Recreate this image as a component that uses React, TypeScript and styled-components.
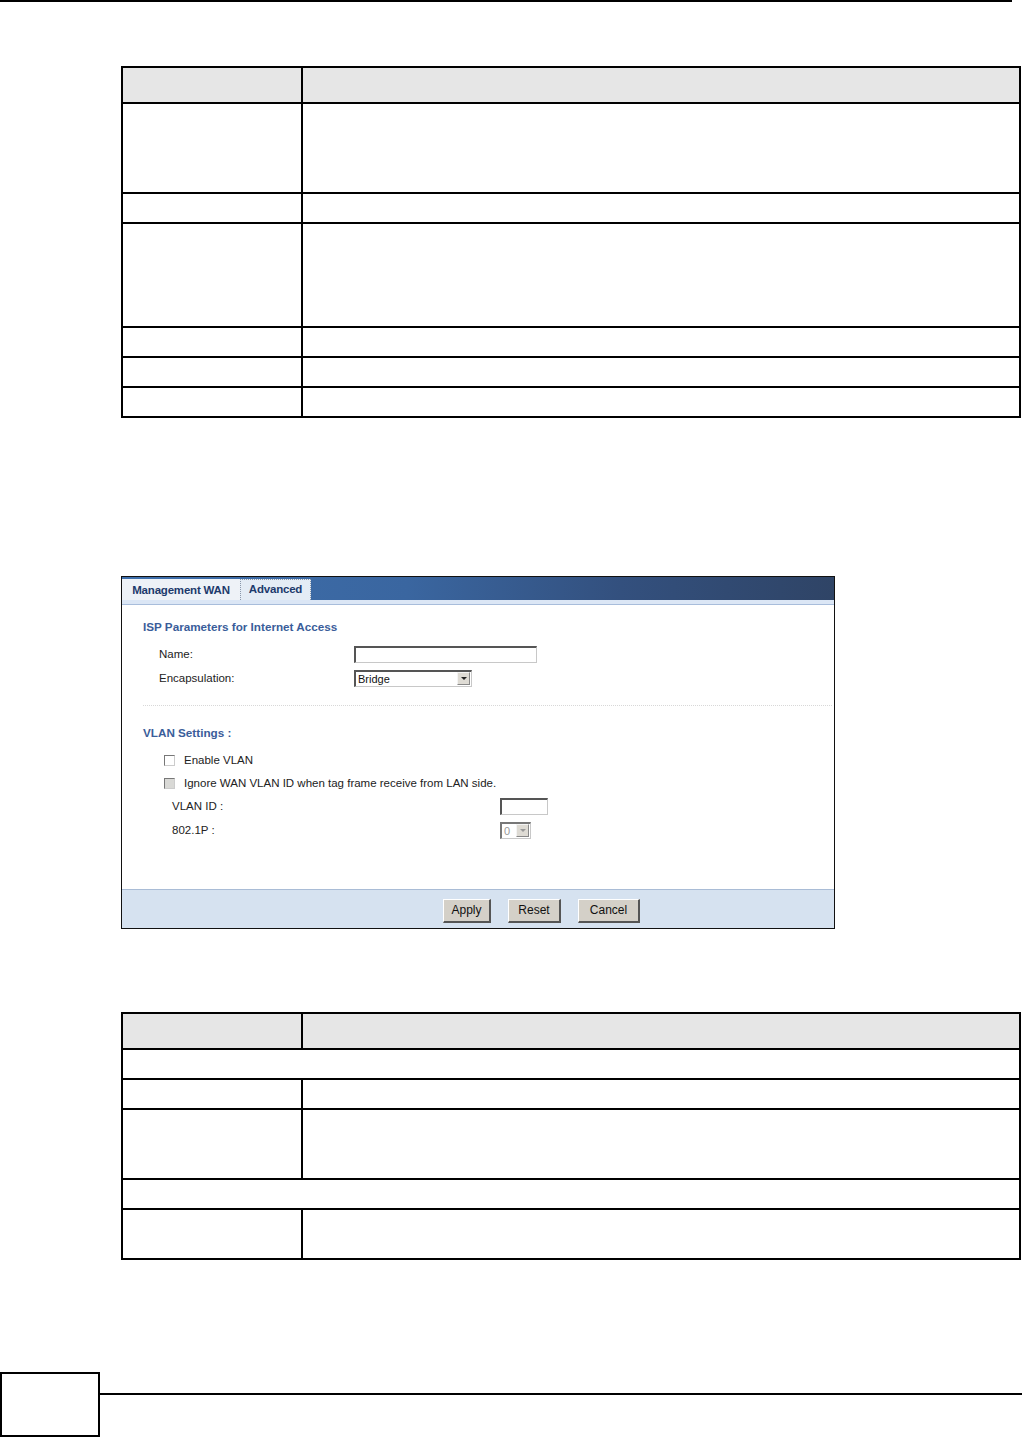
import styled, { createGlobalStyle } from 'styled-components';

const Global = createGlobalStyle`
  html, body { margin: 0; padding: 0; background: #fff; }
  body { font-family: "Liberation Sans", Arial, sans-serif; }
`;

const Page = styled.div`
  width: 1022px;
  min-height: 1437px;
  display: flex;
  flex-direction: column;
`;

const TopRule = styled.div`
  width: 1012px;
  height: 2px;
  background: #000;
`;

const DocTable = styled.table<{ $top: number }>`
  margin: ${p => p.$top}px 0 0 121px;
  width: 900px;
  border-collapse: collapse;
  table-layout: fixed;
  td, th {
    border: 2px solid #000;
    padding: 0;
  }
  th { background: #e6e6e6; }
  col:first-child { width: 180px; }
`;

const Row = styled.tr<{ $h: number }>`
  height: ${p => p.$h}px;
`;

const Panel = styled.div`
  margin: 158px 0 0 121px;
  width: 714px;
  height: 353px;
  border: 1px solid #111;
  box-sizing: border-box;
  display: flex;
  flex-direction: column;
  font-size: 11.5px;
  color: #222;
`;

const TabBar = styled.div`
  height: 23px;
  display: flex;
  align-items: flex-end;
  background: linear-gradient(90deg, #3e6fac 0%, #3a66a0 40%, #33507e 70%, #2f4466 100%);
`;

const Tab = styled.div<{ $active?: boolean; $w: number }>`
  width: ${p => p.$w}px;
  height: 21px;
  box-sizing: border-box;
  display: flex;
  align-items: center;
  justify-content: center;
  font-size: 11.5px;
  font-weight: bold;
  color: #1d3a6c;
  background: ${p => (p.$active ? '#eef2f7' : '#e4ecf5')};
  border: ${p => (p.$active ? '1px solid #eef2f7' : '1px dotted #8a97aa')};
  border-bottom: none;
  letter-spacing: -0.2px;
  padding-bottom: ${p => (p.$active ? '0' : '3px')};
`;

const Strip = styled.div`
  height: 4px;
  background: #dbe6f5;
  border-bottom: 1px solid #a8bddb;
`;

const Body = styled.div`
  flex: 1;
  background: #fff;
  padding: 15px 0 0 21px;
`;

const Heading = styled.div`
  font-weight: bold;
  color: #3a5d9a;
  font-size: 11.7px;
  height: 14px;
  line-height: 14px;
`;

const FormGrid = styled.div<{ $label: number }>`
  display: grid;
  grid-template-columns: ${p => p.$label}px 1fr;
  align-items: center;
  row-gap: 6px;
`;

const Label = styled.div`
  height: 18px;
  line-height: 18px;
`;

const TextBox = styled.div<{ $w: number }>`
  width: ${p => p.$w}px;
  height: 17px;
  box-sizing: border-box;
  border: 1px solid #c8c8c8;
  border-top: 2px solid #555;
  border-left: 2px solid #555;
  background: #fff;
`;

const Select = styled.div<{ $w: number; $disabled?: boolean }>`
  width: ${p => p.$w}px;
  height: 17px;
  box-sizing: border-box;
  border: 1px solid #c8c8c8;
  border-top: 2px solid ${p => (p.$disabled ? '#777' : '#555')};
  border-left: 2px solid ${p => (p.$disabled ? '#777' : '#555')};
  display: flex;
  align-items: center;
  justify-content: space-between;
  padding-left: 2px;
  font-size: 11px;
  color: ${p => (p.$disabled ? '#999' : '#111')};
  background: #fff;
`;

const Arrow = styled.span<{ $disabled?: boolean }>`
  width: 13px;
  height: 13px;
  background: #dedbd4;
  border: 1px solid #f4f4f4;
  border-right-color: #888;
  border-bottom-color: #888;
  box-sizing: border-box;
  display: flex;
  align-items: center;
  justify-content: center;
  margin-right: 1px;
  &::after {
    content: '';
    border-left: 3px solid transparent;
    border-right: 3px solid transparent;
    border-top: 3px solid ${p => (p.$disabled ? '#999' : '#222')};
  }
`;

const Separator = styled.div`
  margin: 18px 2px 0 0;
  border-top: 1px dotted #d8d8d8;
`;

const CheckRow = styled.div`
  display: flex;
  align-items: center;
  height: 18px;
  padding-left: 21px;
  gap: 8px;
  margin-top: 5px;
`;

const Box = styled.span<{ $disabled?: boolean }>`
  width: 11px;
  height: 11px;
  box-sizing: border-box;
  border: 1px solid #777;
  border-right-color: #ccc;
  border-bottom-color: #ccc;
  background: ${p => (p.$disabled ? '#d9d9d6' : '#fff')};
  margin-right: 1px;
`;

const Footer = styled.div`
  height: 39px;
  background: #d6e2f0;
  border-top: 1px solid #a9bcd6;
  display: flex;
  align-items: center;
  padding: 3px 0 0 321px;
  gap: 17px;
  box-sizing: border-box;
`;

const Button = styled.div<{ $w: number }>`
  width: ${p => p.$w}px;
  height: 24px;
  box-sizing: border-box;
  background: #d4d0c8;
  border: 1px solid #fff;
  border-right: 2px solid #555;
  border-bottom: 2px solid #555;
  display: flex;
  align-items: center;
  justify-content: center;
  font-size: 12px;
  color: #111;
`;

const BottomBar = styled.div`
  margin-top: auto;
  display: flex;
  align-items: flex-start;
`;

const PageBox = styled.div`
  width: 100px;
  height: 65px;
  border: 2px solid #000;
  box-sizing: border-box;
`;

const BottomRule = styled.div`
  flex: 1;
  margin-top: 21px;
  height: 2px;
  background: #000;
`;

const t1 = [90, 30, 104, 30, 30, 30];

export default function App() {
  return (
    <Page>
      <Global />
      <TopRule />
      <DocTable $top={64}>
        <colgroup><col /><col /></colgroup>
        <tbody>
          <Row $h={36}><th /><th /></Row>
          {t1.map((h, i) => (
            <Row key={i} $h={h}><td /><td /></Row>
          ))}
        </tbody>
      </DocTable>

      <Panel>
        <TabBar>
          <Tab $active $w={118}>Management WAN</Tab>
          <Tab $w={71}>Advanced</Tab>
        </TabBar>
        <Strip />
        <Body>
          <Heading>ISP Parameters for Internet Access</Heading>
          <FormGrid $label={195} style={{ marginTop: 11, paddingLeft: 16 }}>
            <Label>Name:</Label>
            <TextBox $w={183} />
            <Label>Encapsulation:</Label>
            <Select $w={118}>
              Bridge
              <Arrow />
            </Select>
          </FormGrid>
          <Separator />
          <Heading style={{ marginTop: 20 }}>VLAN Settings :</Heading>
          <CheckRow style={{ marginTop: 11 }}>
            <Box />
            Enable VLAN
          </CheckRow>
          <CheckRow>
            <Box $disabled />
            Ignore WAN VLAN ID when tag frame receive from LAN side.
          </CheckRow>
          <FormGrid $label={328} style={{ marginTop: 5, paddingLeft: 29 }}>
            <Label>VLAN ID :</Label>
            <TextBox $w={48} />
            <Label>802.1P :</Label>
            <Select $w={31} $disabled>
              0
              <Arrow $disabled />
            </Select>
          </FormGrid>
        </Body>
        <Footer>
          <Button $w={48}>Apply</Button>
          <Button $w={53}>Reset</Button>
          <Button $w={62}>Cancel</Button>
        </Footer>
      </Panel>

      <DocTable $top={83}>
        <colgroup><col /><col /></colgroup>
        <tbody>
          <Row $h={36}><th /><th /></Row>
          <Row $h={30}><td colSpan={2} /></Row>
          <Row $h={30}><td /><td /></Row>
          <Row $h={70}><td /><td /></Row>
          <Row $h={30}><td colSpan={2} /></Row>
          <Row $h={50}><td /><td /></Row>
        </tbody>
      </DocTable>

      <BottomBar>
        <PageBox />
        <BottomRule />
      </BottomBar>
    </Page>
  );
}
